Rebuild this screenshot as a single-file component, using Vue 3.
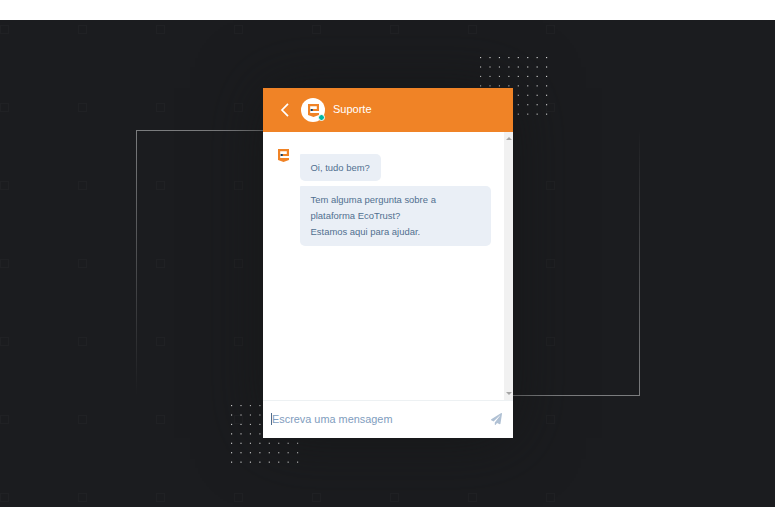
<script setup>
const squares = []
for (let r = 0; r < 7; r++) for (let c = 0; c < 8; c++) squares.push({ x: c * 78 + 0.5, y: r * 78 + 5.5 })
const dots = []
for (let r = 0; r < 7; r++) for (let c = 0; c < 8; c++) dots.push({ x: c * 9.43, y: r * 9.43 })
</script>

<template>
  <main class="page">
    <section class="stage">
      <svg class="backdrop" width="775" height="487" viewBox="0 0 775 487">
        <defs>
          <linearGradient id="fadeDown" x1="0" y1="110" x2="0" y2="375" gradientUnits="userSpaceOnUse">
            <stop offset="0" stop-color="#7b7c7e" />
            <stop offset="1" stop-color="#7b7c7e" stop-opacity="0" />
          </linearGradient>
          <linearGradient id="fadeUp" x1="0" y1="110" x2="0" y2="376" gradientUnits="userSpaceOnUse">
            <stop offset="0" stop-color="#7b7c7e" stop-opacity="0" />
            <stop offset="1" stop-color="#7b7c7e" />
          </linearGradient>
        </defs>
        <rect v-for="(s, i) in squares" :key="i" :x="s.x" :y="s.y" width="8" height="8" fill="none" stroke="#202124" />
        <rect x="136" y="110" width="127" height="1" fill="#7b7c7e" />
        <rect x="136" y="110" width="1" height="265" fill="url(#fadeDown)" />
        <rect x="513" y="375" width="127" height="1" fill="#7b7c7e" />
        <rect x="639" y="110" width="1" height="266" fill="url(#fadeUp)" />
      </svg>
      <svg class="backdrop front" width="775" height="487" viewBox="0 0 775 487">
        <g fill="#dcdcdc">
          <rect v-for="(d, i) in dots" :key="'a' + i" :x="480 + d.x" :y="37 + d.y" width="1.15" height="1.15" />
          <rect v-for="(d, i) in dots" :key="'b' + i" :x="231 + d.x" :y="385 + d.y" width="1.15" height="1.15" />
        </g>
      </svg>
      <article class="chat">
        <header class="head">
          <svg class="back" width="10" height="14" viewBox="0 0 10 14"><path d="M8 .8 2 7 8 13.2" fill="none" stroke="#fff" stroke-width="1.7" /></svg>
          <span class="avatar">
            <svg width="11" height="13" viewBox="0 0 11 13"><path d="M0 0H11V7H4.5V5H8.8V2.2H2.2V9H11V11L5.5 13 0 11z" fill="#f08326" /><path d="M2.6 5h2.2v2H2.6z" fill="#183b58" /></svg>
            <i class="online"></i>
          </span>
          <h1>Suporte</h1>
        </header>
        <div class="body">
          <div class="thread">
            <svg class="logo" width="11" height="13" viewBox="0 0 11 13"><path d="M0 0H11V7H4.5V5H8.8V2.2H2.2V9H11V11L5.5 13 0 11z" fill="#f08326" /><path d="M2.6 5h2.2v2H2.6z" fill="#183b58" /></svg>
            <div class="messages">
              <p class="bubble">Oi, tudo bem?</p>
              <p class="bubble wide">Tem alguma pergunta sobre a<br>plataforma EcoTrust?<br>Estamos aqui para ajudar.</p>
            </div>
          </div>
          <div class="scroll">
            <svg width="6" height="3" viewBox="0 0 6 3"><path d="M0 3 3 0 6 3z" fill="#a5a5a5" /></svg>
            <svg width="6" height="3" viewBox="0 0 6 3"><path d="M0 0H6L3 3z" fill="#a5a5a5" /></svg>
          </div>
        </div>
        <footer class="compose">
          <i class="caret"></i>
          <span class="hint">Escreva uma mensagem</span>
          <svg width="11" height="12" viewBox="0 0 512 512" preserveAspectRatio="none"><path d="M476 3 12 271c-18 10-16 36 2 43l107 45L409 105c6-5 13 3 9 9L176 408v81c0 24 29 33 42 16l64-78 125 53c15 6 31-3 33-18L512 30c3-20-18-36-36-27z" fill="#b0c1d4" /></svg>
        </footer>
      </article>
    </section>
  </main>
</template>

<style>
body { margin: 0; background: #fff; }
</style>

<style scoped>
.page { width: 775px; height: 526px; padding-top: 20px; box-sizing: border-box; overflow: hidden; font-family: "Liberation Sans", Arial, sans-serif; }
.stage { height: 487px; display: flex; justify-content: center; align-items: flex-start; position: relative; overflow: hidden; background: #1b1c1f; }
.backdrop { position: absolute; left: 0; top: 0; }
.chat { position: relative; width: 250px; height: 350px; margin: 68px 0 0 1px; display: flex; flex-direction: column; background: #fff; box-shadow: 0 0 60px rgba(21, 22, 23, .8); }
.head { height: 44px; flex: none; display: flex; align-items: center; box-sizing: border-box; padding-left: 17px; background: #f08326; }
.avatar { width: 24px; height: 24px; margin-left: 11px; border-radius: 50%; display: flex; align-items: center; justify-content: center; background: #fff; position: relative; }
.online { position: absolute; right: 0; bottom: 1px; width: 5px; height: 5px; border-radius: 50%; background: #00b8a0; border: 1px solid #fff; box-sizing: content-box; }
h1 { margin: -2px 0 0 8px; font-size: 11px; line-height: 14px; font-weight: 400; color: #fff; }
.body { flex: 1; display: flex; }
.thread { flex: 1; display: flex; align-items: flex-start; padding: 17px 0 0 15px; }
.messages { margin: 5px 0 0 10.5px; display: flex; flex-direction: column; align-items: flex-start; gap: 5px; }
.bubble { margin: 0; padding: 6px 11px 5px; border-radius: 1px 5px 5px 5px; background: #eaeff6; color: #516f90; font-size: 9.45px; line-height: 16px; white-space: nowrap; }
.wide { width: 169.5px; padding: 6px 11px; }
.scroll { width: 9px; display: flex; flex-direction: column; align-items: center; justify-content: space-between; box-sizing: border-box; padding: 5px 0; background: #f1f1f1; }
.compose { height: 38px; flex: none; box-sizing: border-box; display: flex; align-items: center; padding: 0 11px 1px 8px; border-top: 1px solid #edf1f3; }
.caret { width: 1px; height: 12px; background: #516f90; }
.hint { flex: 1; font-size: 10.9px; line-height: 14px; color: #7f9dbe; }
</style>
